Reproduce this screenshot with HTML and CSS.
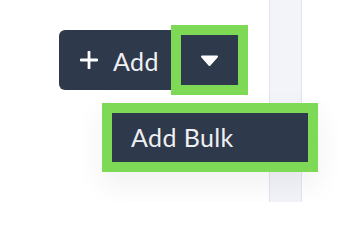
FILE: index.html
```html
<!DOCTYPE html>
<html>
<head>
<meta charset="utf-8">
<link rel="stylesheet" href="styles.css">
</head>
<body>
<div class="page">
  <div class="content">
    <div class="split">
      <button class="btn-main">
        <svg class="plus" width="18" height="18" viewBox="0 0 18 18"><path d="M9 1v16M1 9h16" stroke="#fff" stroke-width="2.8" stroke-linecap="round" fill="none"/></svg>
        <span>Add</span>
      </button>
      <div class="hl caret-hl">
        <div class="caret-btn">
          <svg width="19" height="12" viewBox="0 0 19 12"><polygon points="2,1.5 17,1.5 9.5,10" fill="#fff" stroke="#fff" stroke-width="2" stroke-linejoin="round"/></svg>
        </div>
      </div>
    </div>
  </div>
  <div class="strip"></div>
  <div class="menu hl">
    <div class="menu-item">Add Bulk</div>
  </div>
</div>
</body>
</html>
```
FILE: styles.css
```css
html, body {
  margin: 0;
  padding: 0;
  background: #fff;
}
.page {
  position: relative;
  width: 340px;
  height: 202px;
  overflow: hidden;
  display: flex;
  font-family: Lato, "Open Sans", sans-serif;
}
.content {
  width: 269px;
  padding: 25px 0 0 59px;
  box-sizing: border-box;
}
.split {
  display: flex;
  align-items: center;
}
.btn-main {
  width: 112px;
  height: 60px;
  box-sizing: border-box;
  border: 0;
  margin: 0;
  background: #2e3a4b;
  border-radius: 6px 0 0 6px;
  display: flex;
  align-items: center;
  padding: 0 0 0 21px;
  gap: 15px;
  color: #eef0f3;
  font-family: inherit;
  font-size: 25px;
  line-height: 1;
}
.btn-main span {
  position: relative;
  top: 1px;
  letter-spacing: 0.4px;
}
.plus {
  display: block;
}
.hl {
  background: #7ed957;
  padding: 10px;
  box-sizing: border-box;
}
.caret-hl {
  width: 77px;
  height: 70px;
}
.caret-btn {
  width: 100%;
  height: 100%;
  background: #2e3a4b;
  display: flex;
  align-items: center;
  justify-content: center;
}
.caret-btn svg {
  display: block;
  position: relative;
  top: 1px;
}
.strip {
  width: 33px;
  height: 100%;
  box-sizing: border-box;
  background: #f2f4f9;
  border-left: 1px solid #e3e5ee;
  border-right: 1px solid #e3e5ee;
}
.menu {
  position: absolute;
  left: 102px;
  top: 103px;
  width: 216px;
  height: 69px;
  box-shadow: 0 12px 30px rgba(40, 45, 60, 0.07);
}
.menu-item {
  height: 100%;
  background: #2e3a4b;
  color: #eef0f3;
  font-size: 25px;
  line-height: 49px;
  padding-left: 19px;
  box-sizing: border-box;
  letter-spacing: 0.4px;
}
```
